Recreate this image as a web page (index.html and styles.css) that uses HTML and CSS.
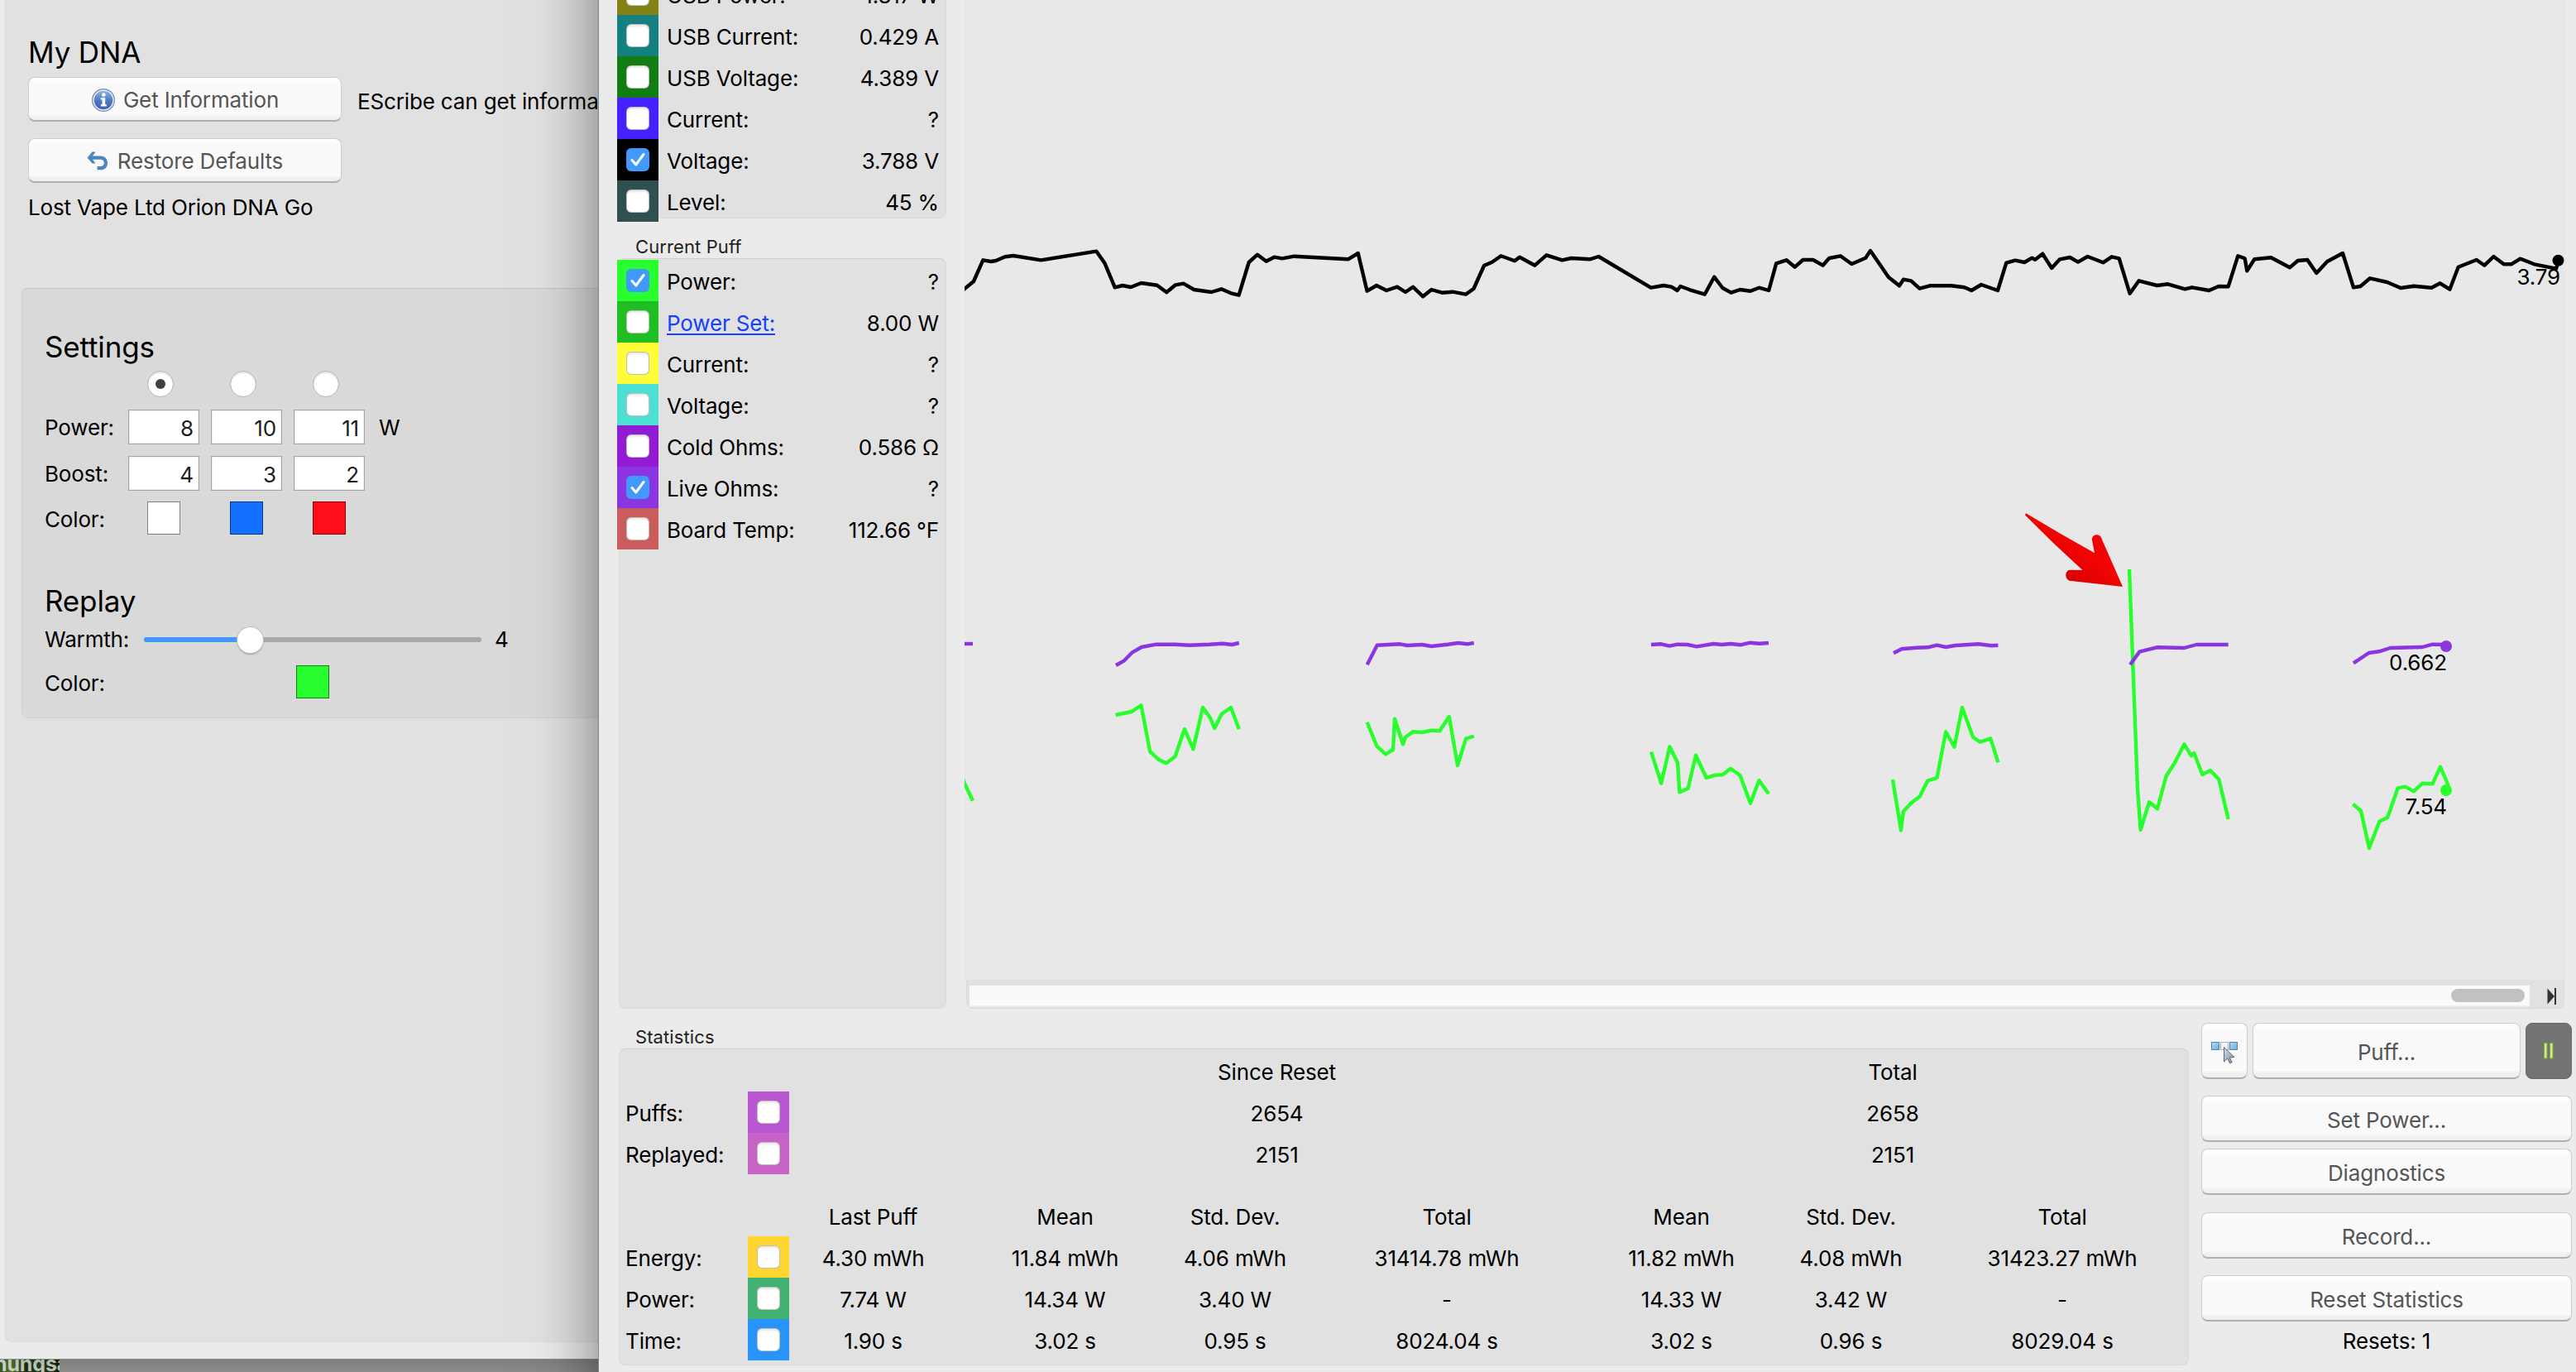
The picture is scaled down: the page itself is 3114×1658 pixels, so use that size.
FILE: index.html
```html
<!DOCTYPE html>
<html lang="en">
<head>
    <meta charset="UTF-8">
    <title>EScribe - Device Monitor</title>
    <link rel="stylesheet" href="styles.css">
</head>
<body>
    <div class="desktop">
        <div class="desktop-thumb"><span>nungsa</span></div>
    </div>

    <!-- main window -->
    <div class="window main-window">
        <div class="main-panel">
            <h1>My DNA</h1>
            <div class="action-row">
                <button class="btn btn-action">
                    <svg class="icon-info" width="30" height="30" viewBox="0 0 30 30">
                        <defs>
                            <linearGradient id="infoFill" x1="0" y1="0" x2="0" y2="1">
                                <stop offset="0" stop-color="#8fb2e0"/>
                                <stop offset="0.55" stop-color="#4a78c0"/>
                                <stop offset="1" stop-color="#3d63ad"/>
                            </linearGradient>
                        </defs>
                        <circle cx="15" cy="15" r="13.3" fill="#f4f6fb" stroke="#7d8fc4" stroke-width="1.4"/>
                        <circle cx="15" cy="15" r="11.3" fill="url(#infoFill)"/>
                        <circle cx="15.3" cy="8.6" r="2.3" fill="#fff"/>
                        <path d="M11.8 12.2h5.4v8h1.6v2.2h-7v-2.2h1.7v-5.8h-1.7z" fill="#fff"/>
                    </svg>
                    Get Information
                </button>
                <span class="action-hint">EScribe can get information</span>
            </div>
            <div class="action-row">
                <button class="btn btn-action">
                    <svg class="icon-undo" width="26" height="23" viewBox="0 0 26 23">
                        <path d="M10.5 0.5h-4L0.5 7.5l6 7h4L7 9.7h9.2c3 0 4.6 1.6 4.6 4.1 0 2.7-1.7 4.3-4.6 4.3h-3.7v4.2h4.2c5 0 8.3-3.3 8.3-8.3 0-5-3.3-8.5-8.5-8.5H7z" fill="#4d86bd"/>
                    </svg>
                    Restore Defaults
                </button>
            </div>
            <p class="device-name">Lost Vape Ltd Orion DNA Go</p>

            <div class="settings-box">
                <h2>Settings</h2>
                <div class="settings-grid">
                    <span></span>
                    <span class="radio radio-on"></span>
                    <span class="radio"></span>
                    <span class="radio"></span>
                    <span></span>

                    <label>Power:</label>
                    <span class="field">8</span>
                    <span class="field">10</span>
                    <span class="field">11</span>
                    <span class="unit">W</span>

                    <label>Boost:</label>
                    <span class="field">4</span>
                    <span class="field">3</span>
                    <span class="field">2</span>
                    <span></span>

                    <label>Color:</label>
                    <span class="swatch white"></span>
                    <span class="swatch blue"></span>
                    <span class="swatch red"></span>
                    <span></span>
                </div>

                <h2 class="replay-title">Replay</h2>
                <div class="warmth-row">
                    <label>Warmth:</label>
                    <div class="slider">
                        <div class="slider-fill"></div>
                        <div class="slider-knob"></div>
                    </div>
                    <span class="warmth-value">4</span>
                </div>
                <div class="replay-color">
                    <label>Color:</label>
                    <span class="swatch green"></span>
                </div>
            </div>
        </div>
    </div>

    <!-- device monitor window -->
    <div class="window monitor-window">
        <div class="monitor-top">
            <div class="readings">
                <div class="panel general-panel">
                    <div class="reading"><span class="chip olive"><i class="check"></i></span><span>USB Power:</span><b>1.817 W</b></div>
                    <div class="reading"><span class="chip teal"><i class="check"></i></span><span>USB Current:</span><b>0.429 A</b></div>
                    <div class="reading"><span class="chip dark-green"><i class="check"></i></span><span>USB Voltage:</span><b>4.389 V</b></div>
                    <div class="reading"><span class="chip indigo"><i class="check"></i></span><span>Current:</span><b>?</b></div>
                    <div class="reading"><span class="chip black"><i class="check checked"><svg viewBox="0 0 28 28"><path d="M7 14.5l4.8 5.5L21 7.5"/></svg></i></span><span>Voltage:</span><b>3.788 V</b></div>
                    <div class="reading"><span class="chip slate"><i class="check"></i></span><span>Level:</span><b>45 %</b></div>
                </div>

                <div class="panel-title">Current Puff</div>
                <div class="panel puff-panel">
                    <div class="reading"><span class="chip lime"><i class="check checked"><svg viewBox="0 0 28 28"><path d="M7 14.5l4.8 5.5L21 7.5"/></svg></i></span><span>Power:</span><b>?</b></div>
                    <div class="reading"><span class="chip mid-green"><i class="check"></i></span><a href="#">Power Set:</a><b>8.00 W</b></div>
                    <div class="reading"><span class="chip yellow"><i class="check"></i></span><span>Current:</span><b>?</b></div>
                    <div class="reading"><span class="chip turquoise"><i class="check"></i></span><span>Voltage:</span><b>?</b></div>
                    <div class="reading"><span class="chip violet"><i class="check"></i></span><span>Cold Ohms:</span><b>0.586 Ω</b></div>
                    <div class="reading"><span class="chip purple"><i class="check checked"><svg viewBox="0 0 28 28"><path d="M7 14.5l4.8 5.5L21 7.5"/></svg></i></span><span>Live Ohms:</span><b>?</b></div>
                    <div class="reading"><span class="chip rose"><i class="check"></i></span><span>Board Temp:</span><b>112.66 °F</b></div>
                </div>
            </div>

            <div class="chart-column">
                <svg class="chart" width="1936" height="1216" viewBox="1166 -32 1936 1216">
                    <defs>
                        <linearGradient id="arrowFill" x1="0" y1="1" x2="0.6" y2="0.4">
                            <stop offset="0.45" stop-color="#d80000"/>
                            <stop offset="0.9" stop-color="#f20404"/>
                        </linearGradient>
                    </defs>

                    <!-- voltage -->
                    <polyline class="trace trace-voltage" points="1160,355 1166,349 1177,340 1188.3,314.3 1198,316 1204,315 1215,310.3 1225,309 1258.4,314.3 1325.4,303.7 1335.6,318.3 1347.7,347.3 1357,345 1367,347 1379.6,342 1398.7,344.7 1410.2,353.3 1421,344.3 1430.6,342.7 1443.4,350 1464.4,353 1476.5,349.3 1488,354.3 1497.6,356.7 1509.7,317 1520,307.7 1530.7,315.7 1540.3,310.7 1550,312.3 1564.5,309.7 1629.6,313.3 1641.7,306 1652.6,351.7 1664,345 1676,351 1689,346.7 1699,353 1708,346.7 1720.2,358.3 1730.4,350 1743,353.7 1756,352.7 1771.8,355.7 1781.4,349 1794,321 1803.7,316.7 1814.5,309.3 1831,315.3 1837,310.7 1855.4,320.7 1869.4,308.3 1888.5,314.3 1899.4,312 1921.7,313.3 1932.5,310 1995.7,347.7 2011,345 2020.5,346.7 2027.6,351 2031.4,346 2043,350.3 2060.7,355.7 2072.2,334.7 2082.4,348 2092.6,353.7 2103.4,350 2116,351.7 2126.5,347.7 2138.2,351 2147.2,318.3 2159.5,314.3 2169.8,322.7 2179.5,314 2191.8,314 2203.5,320.7 2211.2,312 2224.8,309.3 2238.4,319 2255.2,311.7 2261,303 2283,335 2296,345.3 2301,337.7 2310.2,339.3 2320.5,348.7 2332.8,345.3 2358.7,345.3 2374.8,347.3 2383.2,351 2395,344 2415,351 2425.3,317.7 2436.3,314.7 2447.3,317 2456.3,311.7 2460.2,313.7 2469.2,306.7 2480.2,324 2490,313.3 2502.2,311 2512,316.7 2523.6,310 2542.3,317.3 2552.7,310.3 2561.7,312.3 2574.6,354.7 2585.6,339.3 2607.6,345 2620.6,343.3 2641.3,349.3 2649.7,347.3 2670.4,351 2682,346 2693.6,346.3 2705.3,309.3 2713.7,312.3 2716.3,327.3 2725.3,313.3 2745.4,311.3 2768,323.3 2777.7,315 2789.3,314 2800.3,330 2813.3,316 2832,306 2845,347.3 2853.4,346 2865,336.3 2885.7,341 2902,348 2918,345.7 2939.4,347.7 2949.7,342.3 2961.4,349.7 2971.7,322.7 2993.7,314 3003.4,320.7 3014.4,310 3026.7,319.3 3035.7,319.3 3046.7,312.7 3063.5,319.3 3090,324.7 3093,315"/>

                    <!-- power -->
                    <g class="trace trace-power">
                        <polyline points="1164,941 1166,946.7 1176,967.7"/>
                        <polyline points="1348.7,864 1368,860 1379.5,852.3 1390.2,908.3 1401.3,918.3 1409.8,922.3 1420.5,914.3 1432,881 1442.4,905.3 1454,855 1462.5,866.7 1468.3,880 1476.8,862.7 1488,855 1497.8,881.3"/>
                        <polyline points="1652.7,872.7 1664.3,901.7 1675,911.3 1684,906 1686,868.7 1696,899.3 1699,890.7 1708,884.3 1719.2,885 1730.4,882.7 1740.2,883.3 1751.8,866 1762,925 1772,892.7 1781.7,889.7"/>
                        <polyline points="1996,908.7 2008.2,946.7 2018.4,902.3 2028,921.7 2030.3,957.3 2040.6,952.7 2050,912.7 2062.7,940 2073.4,936.7 2082.5,936.3 2092,928.7 2103.5,937 2116,970.7 2126.4,943 2138,959.3"/>
                        <polyline points="2288,942 2298,1003.3 2300.8,980.7 2310.7,970 2320.5,962.7 2330.4,943.3 2341.5,940 2352.2,884.3 2362.5,902.7 2372,855 2385,890.7 2393.7,896.7 2406.3,892.3 2415.4,921.3"/>
                        <polyline points="2574,688 2584,953.3 2587.6,1003 2598,969.3 2608,977.3 2618.6,937.7 2629,921.7 2640.4,899.3 2649,913.3 2652.3,910 2662.3,936 2672,931 2682.3,941.7 2693.7,990"/>
                        <polyline points="2844.4,971.7 2854,980 2864,1025 2876.3,992.7 2886.3,987.7 2898.6,952.3 2907.7,950.7 2917.8,956.3 2928.2,946.7 2940.5,947.3 2950,926.7 2960,950"/>
                    </g>

                    <!-- live ohms -->
                    <g class="trace trace-ohms">
                        <polyline points="1164,778 1176,778"/>
                        <polyline points="1349,804 1359,798.3 1368.8,788.3 1380,782 1397.8,778.7 1420,778.7 1438,779.7 1462.5,778.7 1478,777.7 1489.3,779 1497.8,777"/>
                        <polyline points="1652.7,803.3 1664.7,779.7 1692.4,778.3 1701.3,780 1719.2,779 1730.4,781 1750.4,778.7 1762.5,777 1773.7,778.3 1781.7,777"/>
                        <polyline points="1996,779 2008.2,778.3 2018,780.7 2028,778.7 2040,779 2051,781.3 2071.4,778 2081.3,779 2092,778 2104,779.3 2115.7,776.7 2126.8,777.7 2138,777"/>
                        <polyline points="2289,789.3 2298.8,784.3 2316.6,782.7 2330.4,782.3 2341.5,779.7 2352.2,782 2364,780 2391.7,778.3 2407.5,780.3 2415.4,779.7"/>
                        <polyline points="2575,803.3 2586.2,787.7 2607.2,782.3 2640.4,783 2655,779 2693.7,779"/>
                        <polyline points="2845,801.3 2863.6,789 2876,787.3 2889.5,783 2928.2,782 2940.5,778.7 2957,779"/>
                    </g>

                    <circle cx="3092.5" cy="314.7" r="7" fill="#000"/>
                    <circle cx="2957" cy="781" r="7" fill="#8a35e0"/>
                    <circle cx="2957" cy="955" r="7" fill="#26ff2b"/>

                    <text class="chart-label" x="3095" y="344">3.79</text>
                    <text class="chart-label" x="2958" y="810">0.662</text>
                    <text class="chart-label" x="2958" y="984">7.54</text>

                    <path d="M2449.5 620.5Q2490 645 2532 668.3L2529 653C2528 645 2539 643.5 2541 652L2566 709L2501.5 701.7C2495.5 699.5 2496 689 2502.5 688.7L2517.5 689Q2482 657 2448.5 623Q2447.5 620.5 2449.5 620.5Z" fill="url(#arrowFill)"/>
                </svg>

                <div class="scroll-panel">
                    <div class="scroll-track"><div class="scroll-thumb"></div></div>
                    <svg class="icon-end" width="12" height="20" viewBox="0 0 12 20">
                        <path d="M0.5 0.5L9 10L0.5 19.5z" fill="#333"/>
                        <path d="M10 0v20" stroke="#333" stroke-width="2"/>
                    </svg>
                </div>
            </div>
        </div>

        <div class="monitor-bottom">
            <div class="statistics">
                <div class="panel-title">Statistics</div>
                <div class="panel stats-grid">
                    <span class="since">Since Reset</span>
                    <span class="overall">Total</span>

                    <label>Puffs:</label>
                    <span class="chip orchid"><i class="check"></i></span>
                    <span class="since">2654</span>
                    <span class="overall">2658</span>

                    <label>Replayed:</label>
                    <span class="chip pink"><i class="check"></i></span>
                    <span class="since">2151</span>
                    <span class="overall">2151</span>

                    <span class="first-head">Last Puff</span>
                    <span>Mean</span>
                    <span>Std. Dev.</span>
                    <span>Total</span>
                    <span>Mean</span>
                    <span>Std. Dev.</span>
                    <span>Total</span>

                    <label>Energy:</label>
                    <span class="chip gold"><i class="check"></i></span>
                    <span>4.30 mWh</span>
                    <span>11.84 mWh</span>
                    <span>4.06 mWh</span>
                    <span>31414.78 mWh</span>
                    <span>11.82 mWh</span>
                    <span>4.08 mWh</span>
                    <span>31423.27 mWh</span>

                    <label>Power:</label>
                    <span class="chip sea"><i class="check"></i></span>
                    <span>7.74 W</span>
                    <span>14.34 W</span>
                    <span>3.40 W</span>
                    <span>-</span>
                    <span>14.33 W</span>
                    <span>3.42 W</span>
                    <span>-</span>

                    <label>Time:</label>
                    <span class="chip azure"><i class="check"></i></span>
                    <span>1.90 s</span>
                    <span>3.02 s</span>
                    <span>0.95 s</span>
                    <span>8024.04 s</span>
                    <span>3.02 s</span>
                    <span>0.96 s</span>
                    <span>8029.04 s</span>
                </div>
            </div>

            <div class="controls">
                <div class="puff-row">
                    <button class="btn btn-select">
                        <svg width="34" height="28" viewBox="0 0 34 28">
                            <defs>
                                <linearGradient id="squareFill" x1="0" y1="0" x2="1" y2="1">
                                    <stop offset="0" stop-color="#b5dcf0"/>
                                    <stop offset="1" stop-color="#6aaad6"/>
                                </linearGradient>
                                <linearGradient id="cursorFill" x1="0" y1="0" x2="1" y2="1">
                                    <stop offset="0" stop-color="#d4dbe5"/>
                                    <stop offset="1" stop-color="#7f8b9d"/>
                                </linearGradient>
                            </defs>
                            <rect x="1.5" y="1.5" width="9" height="9" fill="url(#squareFill)" stroke="#4c84bf"/>
                            <rect x="12.5" y="1.5" width="9" height="9" fill="#f3f4fb" stroke="#a9a9cf"/>
                            <rect x="23.5" y="1.5" width="9" height="9" fill="url(#squareFill)" stroke="#4c84bf"/>
                            <path d="M16.5 7.5v17.5l4.2-4 3 6 2.4-1.2-2.8-5.8 5.7-.5z" fill="url(#cursorFill)" stroke="#5b6576"/>
                        </svg>
                    </button>
                    <button class="btn btn-puff">Puff...</button>
                    <button class="btn btn-pause">
                        <svg width="14" height="22" viewBox="0 0 14 22">
                            <rect x="1.5" y="1.5" width="3.5" height="18.5" fill="#c9ea8e" stroke="#82ad38"/>
                            <rect x="8.5" y="1.5" width="3.5" height="18.5" fill="#c9ea8e" stroke="#82ad38"/>
                        </svg>
                    </button>
                </div>
                <button class="btn btn-wide">Set Power...</button>
                <button class="btn btn-wide diagnostics">Diagnostics</button>
                <button class="btn btn-wide">Record...</button>
                <button class="btn btn-wide">Reset Statistics</button>
                <div class="resets">Resets: 1</div>
            </div>
        </div>
    </div>
</body>
</html>
```
FILE: styles.css
```css
* {
    box-sizing: border-box;
}

body {
    margin: 0;
    width: 3114px;
    height: 1658px;
    overflow: hidden;
    position: relative;
    background: #a09e9c;
    font-family: Inter, "Liberation Sans", sans-serif;
    font-size: 26px;
    letter-spacing: -0.15px;
    color: #000;
}

h1, h2, p {
    margin: 0;
    font-size: 35px;
    font-weight: normal;
    line-height: 40px;
}

/* desktop behind the windows */
.desktop {
    height: 1658px;
    display: flex;
    align-items: flex-end;
}

.desktop-thumb {
    width: 72px;
    height: 20px;
    overflow: hidden;
    background: linear-gradient(90deg, #3d5a22, #5a7a2c 20%, #1d3212 45%, #2c4a1c 65%, #16230f);
}

.desktop-thumb span {
    display: block;
    margin-left: -7px;
    font-size: 25px;
    font-weight: bold;
    line-height: 20px;
    color: #dfe3da;
}

.window {
    position: absolute;
    background: #ebebeb;
}

/* main window */
.main-window {
    left: 0;
    top: 0;
    width: 760px;
    height: 1642px;
    padding-left: 6px;
    box-shadow: 0 0 0 1px #8a8887, 0 16px 40px rgba(0, 0, 0, 0.25);
}

.main-panel {
    height: 1622px;
    padding: 43px 0 0 27px;
    background: #e1e1e1;
    border: 1px solid #dadada;
    border-top: 0;
    border-radius: 0 0 0 8px;
}

.main-panel h1 {
    margin-bottom: 10px;
}

.main-panel h2 {
    margin-left: -2px;
}

.action-row {
    display: flex;
    align-items: center;
    height: 54px;
    margin-bottom: 20px;
}

.action-hint {
    margin: 5px 0 0 19px;
    white-space: nowrap;
}

.device-name {
    margin-top: -6px;
    font-size: 26px;
    line-height: 32px;
}

.btn {
    display: flex;
    flex-shrink: 0;
    align-items: center;
    justify-content: center;
    padding: 4px 0 0;
    font: inherit;
    letter-spacing: inherit;
    color: #555;
    background: linear-gradient(#fff, #f9f9f9 15%, #fafafa 87%, #f2f2f2 90%, #efefef);
    border: 1px solid #cdcdcd;
    border-bottom: 2px solid #b0b0b0;
    border-radius: 8px;
}

.btn-action {
    width: 379px;
    height: 54px;
    padding-top: 2px;
}

.icon-info {
    margin-right: 9px;
}

.icon-undo {
    margin-right: 11px;
}

.settings-box {
    margin: 81px 0 0 -8px;
    height: 520px;
    padding: 50px 0 0 29px;
    background: #d9d9d9;
    border: 1px solid #d2d2d2;
    border-top-color: #c6c6c6;
    border-radius: 8px;
}

.settings-grid {
    display: grid;
    grid-template-columns: 85px 86px 86px 86px 60px;
    grid-template-rows: 56px 56px 55px 40px;
    column-gap: 14px;
    align-items: start;
    line-height: 44px;
}

.settings-box label {
    margin-left: -2px;
}

.radio {
    width: 32px;
    height: 32px;
    margin: 9px 0 0 23px;
    display: flex;
    align-items: center;
    justify-content: center;
    border-radius: 50%;
    background: #fff;
    border: 1px solid #b4b4b4;
    box-shadow: inset 0 2px 2px #e4e4e4;
}

.radio-on::after {
    content: "";
    width: 12px;
    height: 12px;
    border-radius: 50%;
    background: #404040;
}

.field {
    height: 42px;
    padding-right: 6px;
    line-height: 44px;
    text-align: right;
    color: #1c1c1c;
    background: #fff;
    border: 1px solid #a5a5a5;
    box-shadow: inset 0 0 0 1px #efefef;
}

.unit {
    margin-left: 3px;
}

.swatch {
    width: 40px;
    height: 40px;
    border: 1px solid rgba(0, 0, 0, 0.5);
}

.settings-grid .swatch {
    margin-left: 23px;
}

.swatch.white { background: #fff; }
.swatch.blue { background: #1470ff; }
.swatch.red { background: #ff0d1b; }
.swatch.green { background: #29ff2f; }

.replay-title {
    margin-top: 60px;
}

.warmth-row {
    display: flex;
    align-items: center;
    height: 54px;
    line-height: 58px;
}

.warmth-row label {
    width: 120px;
}

.slider {
    width: 408px;
    height: 6px;
    display: flex;
    align-items: center;
    border-radius: 3px;
    background: #a8a8a8;
}

.slider-fill {
    width: 115px;
    height: 6px;
    border-radius: 3px 0 0 3px;
    background: #4199fb;
}

.slider-knob {
    width: 31px;
    height: 31px;
    margin-left: -2px;
    border-radius: 50%;
    background: #fff;
    box-shadow: 0 0 0 1px #bdbdbd, 0 2px 2px rgba(0, 0, 0, 0.25);
}

.warmth-value {
    margin-left: 16px;
}

.replay-color {
    display: flex;
    height: 40px;
    margin-top: 4px;
    line-height: 43px;
}

.replay-color label {
    width: 304px;
}

/* device monitor window */
.monitor-window {
    left: 724px;
    top: -132px;
    width: 2390px;
    height: 1790px;
    padding-top: 100px;
    box-shadow: 0 0 0 1px #868686, 80px 0 76px 80px rgba(0, 0, 0, 0.5);
}

.monitor-top {
    display: flex;
    height: 1251px;
}

.readings {
    display: flex;
    flex-direction: column;
    width: 396px;
    margin: 0 22px 0 24px;
}

.panel {
    background: #e1e1e1;
    border: 1px solid #dadada;
    border-top-color: #cfcfcf;
    border-radius: 8px;
}

.general-panel {
    height: 296px;
    border-top: 0;
}

.puff-panel {
    flex: 1;
    padding-top: 1px;
}

.panel-title {
    height: 48px;
    padding: 20px 0 0 20px;
    font-size: 22px;
    letter-spacing: 0.1px;
    line-height: 29px;
    color: #222;
}

.reading {
    display: flex;
    height: 50px;
    margin-left: -3px;
    padding-right: 8px;
    line-height: 54px;
}

.reading b {
    margin-left: auto;
    font-weight: normal;
}

.reading a {
    color: #1540ff;
    text-decoration-thickness: 2px;
    text-underline-offset: 3px;
}

.reading .chip {
    margin-right: 10px;
}

.chip {
    width: 50px;
    height: 50px;
    padding: 11px;
}

.check {
    display: block;
    width: 28px;
    height: 28px;
    border-radius: 6px;
    background: #fff;
    border: 1px solid rgba(0, 0, 0, 0.25);
    box-shadow: inset 0 2px 2px #e8e8e8;
}

.checked {
    background: #4199fb;
    border: 0;
    box-shadow: none;
}

.check svg {
    display: block;
    width: 28px;
    height: 28px;
}

.check path {
    fill: none;
    stroke: #fff;
    stroke-width: 3;
    stroke-linecap: round;
    stroke-linejoin: round;
}

.olive { background: #838217; }
.teal { background: #14807f; }
.dark-green { background: #117d12; }
.indigo { background: #4322ff; }
.black { background: #000; }
.slate { background: #30504f; }
.lime { background: #29ff2f; }
.mid-green { background: #1fbe22; }
.yellow { background: #fffd38; }
.turquoise { background: #4be0d3; }
.violet { background: #931bd3; }
.purple { background: #8a35e0; }
.rose { background: #cb5c5e; }
.orchid { background: #b956d2; }
.pink { background: #c763c5; }
.gold { background: #ffd52f; }
.sea { background: #42b273; }
.azure { background: #2793fb; }

/* chart */
.chart-column {
    width: 1936px;
}

.chart {
    display: block;
    background: #e8e8e8;
}

.trace {
    fill: none;
    stroke-width: 4.4;
    stroke-linejoin: round;
}

.trace-voltage { stroke: #000; }
.trace-power { stroke: #26ff2b; }
.trace-ohms { stroke: #8a35e0; }

.chart-label {
    font-size: 26px;
    text-anchor: end;
}

.scroll-panel {
    display: flex;
    width: 1932px;
    height: 35px;
    margin-left: 2px;
    padding: 7px 0 0 3px;
    background: #e1e1e1;
    border: 1px solid #dbdbdb;
    border-top: 0;
    border-radius: 0 0 8px 8px;
}

.scroll-track {
    display: flex;
    justify-content: flex-end;
    width: 1886px;
    height: 26px;
    padding: 4px 6px 0 0;
    background: #fafafa;
    border-bottom: 2px solid #ededed;
}

.scroll-thumb {
    width: 89px;
    height: 16px;
    border-radius: 8px;
    background: #c1c1c1;
}

.icon-end {
    margin: 3px 0 0 21px;
}

/* statistics */
.monitor-bottom {
    display: flex;
    margin-left: 24px;
}

.statistics {
    width: 1898px;
    margin-right: 15px;
}

.stats-grid {
    display: grid;
    grid-template-columns: 147px 50px 203px 261px 150px 362px 205px 205px 306px;
    grid-template-rows: 50px 50px 75px 50px 50px 50px 50px;
    align-content: start;
    height: 383px;
    padding: 1px 0 0 8px;
    line-height: 54px;
    text-align: center;
}

.stats-grid label {
    margin-left: -1px;
    text-align: left;
}

.since {
    grid-column: 4 / span 3;
}

.overall {
    grid-column: 7 / span 3;
}

.first-head {
    grid-column: 3;
}

/* buttons */
.controls {
    display: flex;
    flex-direction: column;
    width: 448px;
    padding-top: 17px;
}

.puff-row {
    display: flex;
    justify-content: space-between;
    height: 68px;
    margin-bottom: 20px;
}

.btn-select {
    width: 56px;
}

.btn-puff {
    width: 324px;
}

.btn-pause {
    width: 56px;
    padding: 0;
    background: #737373;
    border: 1px solid #6a6a6a;
}

.btn-wide {
    height: 56px;
    margin-bottom: 20px;
}

.btn-wide:nth-child(2) {
    margin-bottom: 8px;
}

.diagnostics {
    margin-bottom: 21px;
}

.resets {
    margin-top: -22px;
    line-height: 52px;
    text-align: center;
}
```
